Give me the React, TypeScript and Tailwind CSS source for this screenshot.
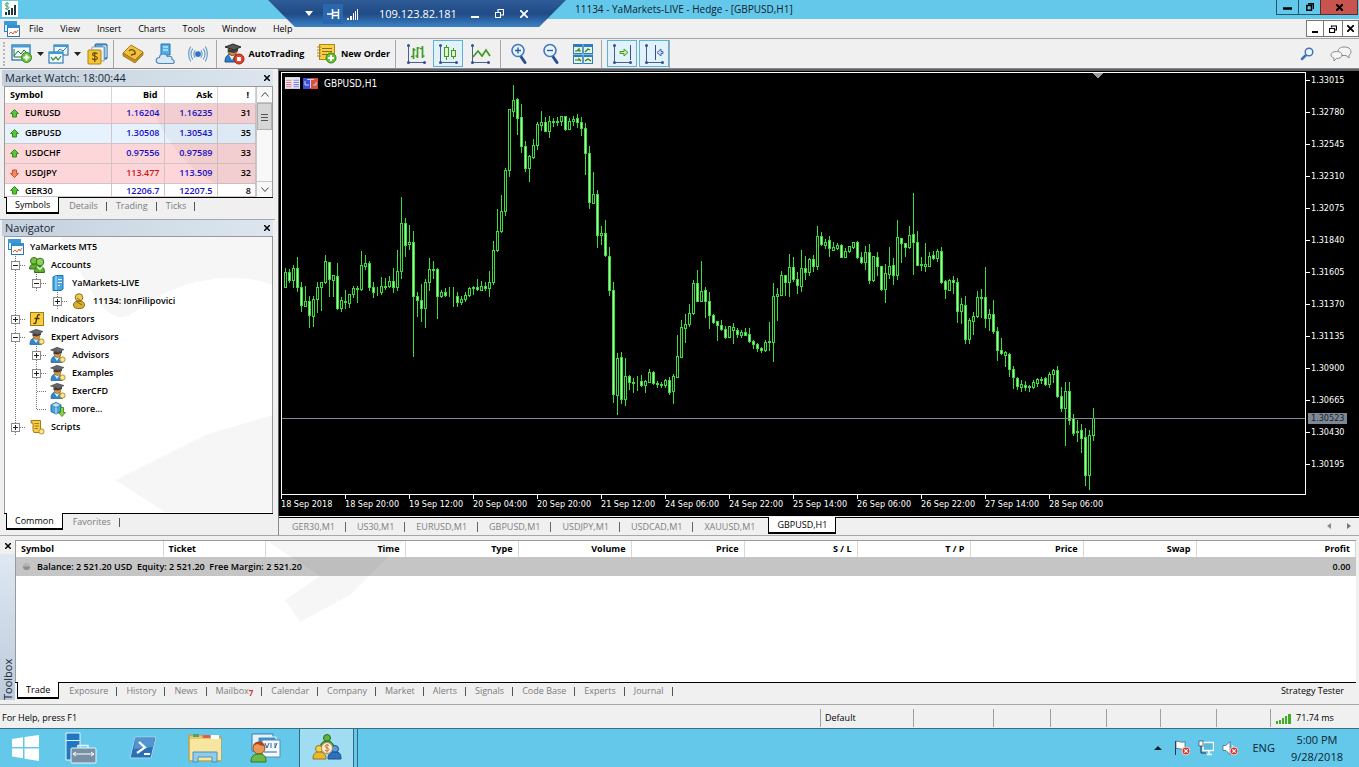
import type { ReactNode } from 'react'
import clsx from 'clsx'

// high, body top, body bottom, low, falling (1) or rising (0), in plot pixels
const candles = [
  [215, 215, 215, 215, 0], [196, 200, 215, 215, 0], [197, 200, 208, 210, 1], [193, 196, 208, 215, 0],
  [185, 196, 215, 219, 1], [210, 215, 233, 239, 1], [214, 229, 234, 234, 0], [224, 229, 243, 255, 1],
  [224, 227, 244, 254, 0], [210, 215, 227, 240, 0], [210, 210, 215, 238, 0], [183, 189, 210, 211, 0],
  [190, 190, 207, 224, 1], [203, 203, 208, 224, 0], [191, 204, 236, 237, 1], [225, 228, 236, 239, 0],
  [218, 229, 230, 236, 1], [222, 222, 231, 235, 0], [214, 216, 222, 225, 0], [214, 216, 217, 230, 0],
  [179, 193, 217, 218, 0], [183, 191, 194, 197, 0], [189, 191, 215, 218, 1], [210, 215, 220, 225, 1],
  [215, 220, 220, 223, 0], [205, 214, 220, 222, 0], [206, 214, 215, 217, 0], [204, 209, 214, 215, 0],
  [196, 209, 215, 220, 1], [178, 199, 215, 218, 0], [125, 151, 199, 206, 0], [146, 151, 173, 184, 1],
  [153, 170, 172, 177, 0], [159, 170, 224, 284, 1], [220, 224, 228, 244, 1], [212, 228, 236, 249, 1],
  [207, 210, 236, 255, 0], [186, 197, 210, 218, 0], [189, 197, 198, 206, 0], [196, 197, 224, 246, 1],
  [218, 220, 224, 225, 0], [216, 220, 223, 224, 1], [215, 223, 223, 224, 0], [215, 224, 224, 234, 0],
  [220, 224, 230, 234, 1], [224, 227, 230, 232, 0], [220, 223, 227, 229, 0], [215, 216, 223, 224, 0],
  [214, 215, 216, 222, 0], [207, 215, 217, 218, 1], [209, 214, 218, 218, 0], [210, 214, 216, 218, 1],
  [199, 210, 216, 224, 0], [169, 178, 210, 212, 0], [137, 159, 178, 179, 0], [123, 139, 159, 160, 0],
  [96, 98, 139, 143, 0], [37, 37, 98, 104, 0], [13, 28, 39, 44, 0], [26, 27, 46, 62, 1],
  [32, 45, 74, 80, 1], [69, 74, 96, 99, 1], [83, 84, 96, 109, 0], [67, 73, 85, 86, 0],
  [50, 52, 73, 77, 0], [39, 50, 53, 58, 0], [45, 50, 59, 59, 1], [44, 49, 59, 65, 0],
  [46, 49, 50, 54, 0], [45, 49, 50, 53, 0], [44, 44, 49, 53, 0], [44, 44, 57, 58, 1],
  [46, 49, 57, 57, 0], [44, 47, 49, 53, 0], [42, 46, 50, 55, 1], [45, 50, 56, 63, 1],
  [51, 56, 81, 102, 1], [74, 81, 130, 136, 1], [100, 122, 131, 131, 0], [118, 122, 163, 175, 1],
  [154, 161, 163, 172, 0], [148, 161, 183, 184, 1], [175, 184, 218, 223, 1], [210, 218, 322, 330, 1],
  [281, 286, 323, 342, 0], [280, 285, 327, 331, 1], [286, 304, 327, 333, 0], [303, 304, 310, 317, 1],
  [306, 310, 311, 320, 0], [304, 310, 310, 318, 0], [303, 309, 313, 314, 1], [308, 309, 313, 320, 0],
  [297, 300, 310, 310, 0], [299, 300, 311, 312, 1], [309, 311, 312, 315, 0], [310, 312, 313, 315, 0],
  [307, 308, 313, 315, 0], [305, 308, 320, 322, 1], [302, 304, 319, 331, 0], [263, 284, 305, 305, 0],
  [248, 255, 285, 285, 0], [242, 252, 256, 270, 0], [232, 241, 252, 254, 0], [208, 211, 241, 242, 0],
  [198, 211, 229, 229, 1], [189, 219, 229, 229, 0], [215, 218, 229, 245, 1], [220, 229, 243, 256, 1],
  [242, 243, 250, 251, 1], [249, 249, 253, 268, 1], [248, 253, 257, 258, 1], [254, 257, 265, 266, 1],
  [254, 254, 265, 265, 0], [251, 255, 258, 271, 0], [256, 258, 262, 265, 1], [258, 260, 263, 265, 0],
  [256, 260, 263, 263, 1], [256, 262, 269, 270, 1], [268, 269, 272, 276, 1], [271, 272, 276, 279, 1],
  [275, 276, 278, 280, 1], [268, 270, 278, 279, 0], [250, 269, 270, 278, 0], [211, 224, 270, 289, 0],
  [216, 222, 224, 248, 0], [199, 203, 223, 223, 0], [203, 203, 210, 223, 1], [182, 195, 210, 224, 0],
  [185, 195, 207, 209, 1], [200, 207, 213, 221, 1], [178, 196, 214, 219, 0], [184, 196, 200, 207, 1],
  [186, 187, 200, 203, 0], [183, 187, 194, 199, 1], [154, 164, 194, 197, 0], [160, 164, 172, 173, 1],
  [167, 170, 173, 176, 0], [164, 168, 176, 184, 1], [170, 175, 178, 178, 0], [171, 173, 176, 177, 0],
  [172, 173, 185, 185, 1], [176, 179, 185, 185, 0], [174, 174, 179, 180, 0], [170, 170, 175, 176, 0],
  [169, 170, 185, 186, 1], [180, 185, 190, 191, 1], [174, 180, 190, 197, 0], [172, 180, 208, 211, 1],
  [184, 184, 208, 209, 0], [180, 185, 194, 203, 1], [194, 194, 217, 218, 1], [192, 201, 217, 230, 0],
  [175, 194, 202, 206, 0], [186, 193, 203, 212, 1], [148, 165, 203, 207, 0], [166, 166, 171, 190, 1],
  [171, 171, 175, 184, 1], [154, 163, 175, 176, 0], [121, 162, 170, 202, 1], [159, 170, 193, 193, 1],
  [185, 192, 193, 198, 0], [171, 192, 194, 199, 0], [180, 184, 194, 194, 0], [179, 183, 186, 187, 1],
  [177, 179, 186, 189, 0], [175, 179, 210, 211, 1], [208, 209, 217, 226, 1], [207, 208, 218, 218, 0],
  [204, 208, 210, 221, 1], [206, 210, 239, 250, 1], [226, 232, 239, 251, 0], [224, 233, 267, 271, 1],
  [246, 248, 267, 271, 0], [240, 244, 249, 262, 0], [219, 225, 244, 245, 0], [217, 225, 226, 245, 0],
  [195, 225, 246, 255, 1], [237, 242, 246, 258, 0], [228, 242, 259, 261, 1], [255, 259, 278, 288, 1],
  [266, 278, 281, 282, 1], [279, 280, 283, 294, 0], [281, 282, 297, 304, 1], [294, 297, 305, 316, 1],
  [305, 306, 314, 317, 1], [308, 312, 315, 319, 0], [309, 313, 315, 318, 1], [313, 314, 315, 319, 0],
  [308, 310, 315, 316, 0], [306, 307, 311, 314, 0], [305, 307, 308, 311, 0], [305, 306, 312, 313, 1],
  [300, 302, 312, 315, 0], [297, 298, 302, 310, 0], [294, 298, 324, 325, 1], [315, 324, 336, 339, 1],
  [310, 319, 336, 373, 0], [310, 319, 348, 352, 1], [342, 346, 361, 363, 1], [348, 359, 360, 369, 0],
  [352, 358, 366, 380, 1], [356, 365, 403, 413, 1], [358, 363, 403, 417, 0], [336, 346, 363, 368, 0],
  [346, 346, 346, 346, 0],
]

const prices = [
  '1.33015', '1.32780', '1.32545', '1.32310', '1.32075', '1.31840', '1.31605',
  '1.31370', '1.31135', '1.30900', '1.30665', '1.30430', '1.30195',
]

const times = [
  '18 Sep 2018', '18 Sep 20:00', '19 Sep 12:00', '20 Sep 04:00', '20 Sep 20:00', '21 Sep 12:00', '24 Sep 06:00',
  '24 Sep 22:00', '25 Sep 14:00', '26 Sep 06:00', '26 Sep 22:00', '27 Sep 14:00', '28 Sep 06:00',
]

const quotes = [
  { symbol: 'EURUSD', bid: '1.16204', ask: '1.16235', spread: '31', row: 'h-5 bg-[#fcd6d8]', bidColor: 'text-[#1a10c8]', up: true },
  { symbol: 'GBPUSD', bid: '1.30508', ask: '1.30543', spread: '35', row: 'h-5 bg-[#e6f3fe]', bidColor: 'text-[#1a10c8]', up: true },
  { symbol: 'USDCHF', bid: '0.97556', ask: '0.97589', spread: '33', row: 'h-5 bg-[#fcd6d8]', bidColor: 'text-[#1a10c8]', up: true },
  { symbol: 'USDJPY', bid: '113.477', ask: '113.509', spread: '32', row: 'h-5 bg-[#fcd6d8]', bidColor: 'text-[#d01818]', up: false },
  { symbol: 'GER30', bid: '12206.7', ask: '12207.5', spread: '8', row: 'h-[13px] align-bottom leading-[10px] bg-white', bidColor: 'text-[#1a10c8]', up: true },
]

// guides: | line, T branch, L last branch, + collapsed, - expanded, space empty
const tree = [
  { guides: '', icon: 'app', label: 'YaMarkets MT5' },
  { guides: '-', icon: 'accounts', label: 'Accounts' },
  { guides: '|-', icon: 'server', label: 'YaMarkets-LIVE' },
  { guides: '| +', icon: 'user', label: '11134: IonFilipovici' },
  { guides: '+', icon: 'function', label: 'Indicators' },
  { guides: '-', icon: 'expert', label: 'Expert Advisors' },
  { guides: '|+', icon: 'expert', label: 'Advisors' },
  { guides: '|+', icon: 'expert', label: 'Examples' },
  { guides: '|T', icon: 'expert', label: 'ExerCFD' },
  { guides: '|L', icon: 'more', label: 'more...' },
  { guides: '+', icon: 'script', label: 'Scripts' },
]

const menus = ['File', 'View', 'Insert', 'Charts', 'Tools', 'Window', 'Help']
const chartTabs = ['GER30,M1', 'US30,M1', 'EURUSD,M1', 'GBPUSD,M1', 'USDJPY,M1', 'USDCAD,M1', 'XAUUSD,M1', 'GBPUSD,H1']
const toolboxTabs = [
  'Trade', 'Exposure', 'History', 'News', 'Mailbox', 'Calendar', 'Company',
  'Market', 'Alerts', 'Signals', 'Code Base', 'Experts', 'Journal',
]

const columns = [
  { label: 'Symbol', col: 'w-[147px]', align: 'text-left' },
  { label: 'Ticket', col: 'w-[102px]', align: 'text-left' },
  { label: 'Time', col: 'w-[140px]', align: 'text-right' },
  { label: 'Type', col: 'w-[113px]', align: 'text-right' },
  { label: 'Volume', col: 'w-[113px]', align: 'text-right' },
  { label: 'Price', col: 'w-[113px]', align: 'text-right' },
  { label: 'S / L', col: 'w-[113px]', align: 'text-right' },
  { label: 'T / P', col: 'w-[113px]', align: 'text-right' },
  { label: 'Price', col: 'w-[113px]', align: 'text-right' },
  { label: 'Swap', col: 'w-[113px]', align: 'text-right' },
  { label: 'Profit', col: '', align: 'text-right' },
]

function AppIcon() {
  return (
    <svg width="16" height="16" viewBox="0 0 16 16">
      <rect x=".5" y=".5" width="12" height="10" fill="#e4f4fd" stroke="#2a86c4" />
      <rect x="0" y="0" width="13" height="4" fill="#3a9ad6" />
      <rect x="3.500" y="4.500" width="12" height="11" fill="#fff" stroke="#2a76b4" />
      <rect x="3" y="4" width="13" height="3" fill="#3a8cd0" />
      <path d="M5 13l2-2 2 2 2-3 1 2 2-3" fill="none" stroke="#e0603c" />
    </svg>
  )
}

function ExpertIcon() {
  return (
    <svg width="16" height="16" viewBox="0 0 16 16">
      <path d="M1 15.500c0-5 2-6.500 5.500-6.500s6 2 6 6.500z" fill="#2f86cf" stroke="#1b5c97" strokeWidth=".7" />
      <path d="M4 9.500l3 4.500 3-4.500z" fill="#d7ecf8" />
      <circle cx="7.500" cy="7" r="3.500" fill="#d8973a" stroke="#8b5a18" strokeWidth=".6" />
      <path d="M.5 3L7 .3 14 2.500 8.500 5.500z" fill="#66666c" stroke="#333" strokeWidth=".5" />
      <path d="M3.500 4.300v2.500l4.500.7 4-1.800V3.800L8.500 5.500z" fill="#3c3c42" />
      <circle cx="12.500" cy="12.500" r="2.600" fill="#fbe689" stroke="#b8902a" />
    </svg>
  )
}

function TreeIcon({ name }: { name: string }) {
  switch (name) {
    case 'app':
      return <AppIcon />
    case 'expert':
      return <ExpertIcon />
    case 'accounts':
      return (
        <svg width="16" height="16" viewBox="0 0 16 16">
          <circle cx="5" cy="4" r="3.500" fill="#7ac043" stroke="#2e7415" />
          <path d="M.5 12c0-3 2-5 4.500-5s4.500 2 4.500 5z" fill="#5fae2d" stroke="#2e7415" />
          <circle cx="11" cy="5" r="3.800" fill="#8fd05a" stroke="#2e7415" />
          <path d="M5.500 15.500c0-5 2-6.500 5-6.500s5 1.500 5 6.500z" fill="#5fae2d" stroke="#2e7415" />
          <path d="M8 9.500l3 3 2.500-3" fill="none" stroke="#e3f6d4" strokeWidth="1.300" />
        </svg>
      )
    case 'server':
      return (
        <svg width="16" height="16" viewBox="0 0 16 16">
          <path d="M3 2l3-1.500h7V14l-2 1.500H3z" fill="#45a8e4" stroke="#1b70ae" />
          <path d="M6 .5V15" stroke="#b9e2f8" />
          <path d="M8 4.500h4M8 7.500h4M8 10.500h2" stroke="#fff" />
        </svg>
      )
    case 'user':
      return (
        <svg width="16" height="16" viewBox="0 0 16 16">
          <circle cx="8" cy="4.500" r="3.800" fill="#edc94f" stroke="#92701a" />
          <path d="M2.500 12c0-3 2.500-4 5.500-4s5.500 1 5.500 4-2.500 3.500-5.500 3.500S2.500 15 2.500 12z" fill="#dcae2f" stroke="#92701a" />
          <path d="M6 5l4 3-4 1 5 3" fill="none" stroke="#8a6a18" />
        </svg>
      )
    case 'function':
      return (
        <svg width="16" height="16" viewBox="0 0 16 16">
          <rect x="1.500" y="1.500" width="13" height="13" fill="#f8ce3c" stroke="#a8791a" />
          <path d="M11 4c-2-1-2.500 0-3 3l-1 4c-.3 1.500-1 2-2.500 1M5.500 7.500h5" fill="none" stroke="#4a3308" strokeWidth="1.300" />
        </svg>
      )
    case 'more':
      return (
        <svg width="16" height="16" viewBox="0 0 16 16">
          <path d="M1 4l5-2.500L11 4v6.500l-5 2.500-5-2.500z" fill="#4aa4dc" stroke="#1d6ca4" />
          <path d="M1 4l5 2.500L11 4 6 1.500z" fill="#b8e0f5" stroke="#1d6ca4" strokeWidth=".6" />
          <path d="M6 6.500V13" stroke="#d0edfb" />
          <path d="M10.500 6.500h3v5h2l-3.500 4-3.500-4h2z" fill="#8ccf4a" stroke="#35801a" strokeWidth=".8" />
        </svg>
      )
    default:
      return (
        <svg width="16" height="16" viewBox="0 0 16 16">
          <path d="M2 1.500h9.500v9H14v3H5l-1-2V4H2z" fill="#f6cd47" stroke="#a8791a" />
          <path d="M5.500 4.500H10M5.500 7H10M5.500 9.500H9" stroke="#a8791a" />
          <circle cx="12.500" cy="12.500" r="2.600" fill="#fbe689" stroke="#b8902a" />
        </svg>
      )
  }
}

function Guide({ kind }: { kind: string }) {
  const boxed = kind === '+' || kind === '-'
  return (
    <svg className="shrink-0" width="21" height="18" viewBox="0 0 21 18" fill="none" stroke="#777" strokeDasharray="1 1">
      {(kind === '|' || kind === 'T') && <path d="M10.500 0v18" />}
      {kind === 'L' && <path d="M10.500 0v9" />}
      {(kind === 'T' || kind === 'L') && <path d="M11 9.500h9" />}
      {boxed && (
        <>
          <path d="M10.500 0v18M15 9.500h6" />
          <rect x="6.500" y="5.500" width="8" height="8" fill="#fff" stroke="#8a8a8a" strokeDasharray="none" />
          <path d={kind === '+' ? 'M8 9.500h5M10.500 7v5' : 'M8 9.500h5'} stroke="#222" strokeDasharray="none" />
        </>
      )}
    </svg>
  )
}

function ToolButton({ label, active, className, children }: { label: string; active?: boolean; className?: string; children: ReactNode }) {
  return (
    <button
      aria-label={label}
      className={clsx(
        'flex h-[27px] shrink-0 items-center justify-center',
        active ? 'border border-[#5cb2dc] bg-[#e2f2fb]' : '',
        className ?? 'w-[30px]'
      )}
    >
      {children}
    </button>
  )
}

function ToolDivider() {
  return <span className="h-[28px] w-px shrink-0 bg-[#a8a8a8]" />
}

function Caret() {
  return (
    <svg className="ml-1" width="7" height="4" viewBox="0 0 7 4">
      <path d="M0 0h7L3.500 4z" fill="#222" />
    </svg>
  )
}

// The axes shared by every chart-type icon
function Axes({ children }: { children: ReactNode }) {
  return (
    <svg width="22" height="22" viewBox="0 0 22 22" fill="none">
      <path d="M3.500 2v17.500H20" stroke="#4d5f8e" />
      <circle cx="3.500" cy="2.500" r="1.500" fill="#35508f" />
      <circle cx="3.500" cy="19.500" r="1.500" fill="#35508f" />
      <circle cx="19.500" cy="19.500" r="1.500" fill="#35508f" />
      {children}
    </svg>
  )
}

function Magnifier({ plus }: { plus?: boolean }) {
  return (
    <svg width="18" height="22" viewBox="0 0 18 22" fill="none">
      <path d="M10.500 13l4.500 6.500" stroke="#284f96" strokeWidth="3" strokeLinecap="round" />
      <circle cx="8" cy="7.500" r="6" fill="#e9f5fd" stroke="#4278bd" strokeWidth="1.600" />
      <path d={plus ? 'M5 7.500h6M8 4.500v6' : 'M5 7.500h6'} stroke="#2f5ba4" strokeWidth="1.400" />
    </svg>
  )
}

function Toolbar() {
  return (
    <div className="flex h-[30px] items-center border-t border-[#a5a5a5] bg-[#f0f0f0]">
      <span className="ml-[3px] mr-1 h-6 w-0 border-l-2 border-dotted border-[#b5b5b5]" />
      <ToolButton label="New chart" className="w-[36px]">
        <svg width="22" height="20" viewBox="0 0 22 20">
          <rect x="1" y="1" width="18" height="15" fill="#f2fafe" stroke="#2f7fb9" strokeWidth="1.400" />
          <path d="M1 2.500h18" stroke="#3f9ad6" strokeWidth="2" />
          <path d="M3 5v8h13M3 12l4-5 3 3 3-4 3 3" fill="none" stroke="#2f6a24" />
          <circle cx="15.500" cy="13.500" r="5" fill="#6dc23c" stroke="#2f8a1c" />
          <path d="M12.500 13.500h6M15.500 10.500v6" stroke="#fff" strokeWidth="2" />
        </svg>
        <Caret />
      </ToolButton>
      <ToolButton label="Profiles" className="w-[38px]">
        <svg width="22" height="20" viewBox="0 0 22 20">
          <rect x="6" y="1" width="14" height="10" fill="#f2fafe" stroke="#2f7fb9" strokeWidth="1.200" />
          <path d="M6 2h14" stroke="#3f9ad6" strokeWidth="2" />
          <path d="M9 8l3-3 3 2 4-4" fill="none" stroke="#4578a0" />
          <rect x="1" y="8" width="14" height="11" fill="#f2fafe" stroke="#2f7fb9" strokeWidth="1.200" />
          <path d="M1 9h14" stroke="#3f9ad6" strokeWidth="2" />
          <path d="M3 13l2 3 3-3 2 3 3-4" fill="none" stroke="#3c8a2a" strokeWidth="1.200" />
        </svg>
        <Caret />
      </ToolButton>
      <ToolButton label="Market watch" className="w-[30px]">
        <svg width="22" height="22" viewBox="0 0 22 22">
          <rect x="8" y="1" width="12" height="15" rx="1" fill="#57a6e0" stroke="#1d5c9a" />
          <path d="M16 3h3v11" fill="none" stroke="#e8f6ff" />
          <rect x="5" y="4" width="12" height="14" fill="#eef3f6" stroke="#888" strokeWidth=".7" />
          <rect x="1" y="7" width="13" height="14" rx="1" fill="#f5c535" stroke="#ad7f16" />
          <path d="M10.500 11c-1-1.500-5-1.500-5 .5s5 1.500 5 3.500-4 2-5.500.5M7.800 9v10" fill="none" stroke="#6b4a05" strokeWidth="1.200" />
        </svg>
      </ToolButton>
      <ToolDivider />
      <ToolButton label="Navigator" className="w-[38px]">
        <svg width="22" height="20" viewBox="0 0 22 20">
          <path d="M1 9l8-8 12 7-8 9z" fill="#f0c040" stroke="#a87d18" />
          <path d="M1 9v3l12 7 8-8V8l-8 8z" fill="#c98d1c" stroke="#8a6010" strokeWidth=".6" />
          <path d="M7 7c3-3 7 0 6 3l-4 1" fill="none" stroke="#6b4a05" strokeWidth="1.300" />
        </svg>
      </ToolButton>
      <ToolButton label="Cloud" className="w-[28px]">
        <svg width="22" height="22" viewBox="0 0 22 22">
          <path d="M6 1h9v11H6z" fill="#52b0e8" stroke="#2374b0" />
          <path d="M8 4h5M8 7h5" stroke="#fff" />
          <path d="M5 20.500c-5 0-5-6-.5-6 0-4 6.500-5 8-1 4-1 5 1 4.500 3 3 .5 3 4 0 4z" fill="#d6e9f8" stroke="#4f84bc" strokeWidth="1.200" />
        </svg>
      </ToolButton>
      <ToolButton label="Signals" className="w-[36px]">
        <svg width="20" height="18" viewBox="0 0 22 18" fill="none" stroke="#6c9cc8" strokeWidth="1.300">
          <circle cx="11" cy="9" r="2.500" fill="#2f73b8" stroke="#2f73b8" />
          <path d="M8 5c-2 2-2 6 0 8M14 5c2 2 2 6 0 8M5.500 3c-3 3-3 9 0 12M16.500 3c3 3 3 9 0 12M3 1c-3 4-3 12 0 16M19 1c3 4 3 12 0 16" />
        </svg>
      </ToolButton>
      <ToolDivider />
      <ToolButton label="AutoTrading" className="w-[94px] gap-1 font-bold">
        <svg width="21" height="22" viewBox="0 0 21 22">
          <path d="M1 19c0-6 3-8 7-8s7 2 7 8z" fill="#2f7fc8" stroke="#1c5288" />
          <path d="M5 12l3 5 3-5z" fill="#f3efe4" />
          <circle cx="8.500" cy="8" r="4.500" fill="#d5893a" stroke="#854f17" />
          <path d="M1 4l8-3 8 3-7 3z" fill="#55555b" stroke="#2b2b2b" />
          <path d="M4 6v3l6 1 4-2V5l-4 2z" fill="#3c3c42" />
          <circle cx="15" cy="16" r="5" fill="#e0452c" stroke="#a32210" />
          <rect x="13" y="14" width="4" height="4" fill="#fff" />
        </svg>
        AutoTrading
      </ToolButton>
      <ToolButton label="New Order" className="w-[84px] gap-1 font-bold">
        <svg className="shrink-0" width="21" height="21" viewBox="0 0 21 21">
          <rect x="3.500" y="1.500" width="15" height="15" fill="#f7d043" stroke="#b0861c" />
          <path d="M6 5.500h10M6 8.500h10M6 11.500h7" stroke="#8b6b13" />
          <path d="M1 4h4M1 7h4M1 10h4M1 13h4" stroke="#a8801c" />
          <circle cx="15" cy="15" r="5" fill="#6dc23c" stroke="#2f8a1c" />
          <path d="M12 15h6M15 12v6" stroke="#fff" strokeWidth="2" />
        </svg>
        <span className="whitespace-nowrap">New Order</span>
      </ToolButton>
      <ToolDivider />
      <div className="flex gap-0.5 px-[5px]">
        <ToolButton label="Bar chart">
          <Axes>
            <path d="M8.500 5v11M6 13.500h2M8.500 7h2M12.500 4v11M12.500 13h-2M12.500 5h2M17.500 3v12M15 5.500h2M17.500 13h2" stroke="#3f9a22" strokeWidth="1.700" />
          </Axes>
        </ToolButton>
        <ToolButton label="Candlesticks" active>
          <Axes>
            <path d="M9.500 2v15M16.500 5v11" stroke="#3f9a22" />
            <rect x="7.500" y="4.500" width="4" height="9" fill="#dff5c8" stroke="#3f9a22" />
            <rect x="14.500" y="7.500" width="4" height="6" fill="#dff5c8" stroke="#3f9a22" />
          </Axes>
        </ToolButton>
        <ToolButton label="Line chart">
          <Axes>
            <path d="M4 14l5-6 4 5 4-6 4 6" stroke="#3f9a22" strokeWidth="1.700" />
          </Axes>
        </ToolButton>
      </div>
      <ToolDivider />
      <div className="flex gap-0.5 px-[3px]">
        <ToolButton label="Zoom in"><Magnifier plus /></ToolButton>
        <ToolButton label="Zoom out"><Magnifier /></ToolButton>
        <ToolButton label="Tile windows">
          <svg width="20" height="20" viewBox="0 0 20 20">
            <rect width="20" height="20" fill="#2f7dc0" />
            <path d="M1 3h8v6H1zM11 3h8v6h-8zM1 13h8v6H1zM11 13h8v6h-8z" fill="#e6f5df" />
            <path d="M10 0v20M0 10.500h20" stroke="#bfe0f4" strokeWidth=".6" />
            <path d="M2 7h2l2-2v2h2M12 8l3-3 2 1M2 16h4v-1l2 2M12 17l3-2 3 2" fill="none" stroke="#2a7a1c" strokeWidth="1.200" />
          </svg>
        </ToolButton>
      </div>
      <ToolDivider />
      <div className="flex gap-0.5 pl-[5px]">
        <ToolButton label="Auto scroll" active>
          <Axes>
            <path d="M19.500 2v15" stroke="#35508f" />
            <path d="M9 8.500h4V6l4 3.500-4 3.500v-2.500H9z" fill="#c7f0a8" stroke="#3f9a22" />
          </Axes>
        </ToolButton>
        <ToolButton label="Chart shift" active>
          <Axes>
            <path d="M12.500 2v15" stroke="#35508f" />
            <path d="M20 8.500h-2V6l-4 3.500 4 3.500v-2.500h2z" fill="#c9dcf8" stroke="#4a66b0" />
          </Axes>
        </ToolButton>
      </div>
      <ToolDivider />
      <div className="ml-auto flex items-center gap-4 pr-[7px]">
        <button aria-label="Search">
          <svg width="14" height="14" viewBox="0 0 14 14" fill="none">
            <path d="M5.500 8.500L2 12" stroke="#3f70b8" strokeWidth="2.500" strokeLinecap="round" />
            <circle cx="9" cy="5" r="3.800" fill="#eaf4fd" stroke="#3f70b8" strokeWidth="1.400" />
          </svg>
        </button>
        <button aria-label="Chat">
          <svg width="22" height="16" viewBox="0 0 22 16" fill="#f5f5f5" stroke="#8a8a8a">
            <path d="M14 1c4 0 7 1.500 7 4.500 0 2-1 3-2 3.500v3l-3-2.500h-3C10 9.500 8 8 8 5.500S10 1 14 1z" />
            <path d="M6.500 5.500c3 0 5.500 1 5.500 3.500s-2.500 3.500-5.500 3.500L4 15v-3C2 11.500 1 10.500 1 9c0-2.500 2.500-3.500 5.500-3.500z" />
          </svg>
        </button>
      </div>
    </div>
  )
}

function Caption({ title }: { title: string }) {
  return (
    <div className="flex h-4 items-center justify-between bg-gradient-to-r from-[#c3d1de] to-[#dde6ee] pl-[3px]">
      <h2 className="text-[11px] leading-4 text-[#1c2733]">{title}</h2>
      <CloseButton />
    </div>
  )
}

function CloseButton() {
  return (
    <button aria-label="Close" className="flex size-3 items-center justify-center">
      <svg width="6" height="6" viewBox="0 0 6 6" stroke="#000" strokeWidth="1.500">
        <path d="M0 0l6 6M6 0L0 6" />
      </svg>
    </button>
  )
}

function PanelTabs({ tabs }: { tabs: string[] }) {
  return (
    <div className="flex h-[17px] shrink-0 border-t border-black pl-0.5">
      {tabs.map((tab, i) => (
        <button
          key={tab}
          className={clsx(
            'relative flex items-center whitespace-nowrap',
            i === 0 ? '-mt-px mr-px h-[17px] border-x border-b-2 border-black bg-white px-2 text-black' : 'h-4 px-[9px] text-[#7c7c7c]'
          )}
        >
          {tab}
          {tab === 'Mailbox' && <span className="mt-1 text-[8px] font-bold text-[#d8303c]">7</span>}
          {i > 0 && <span className="absolute right-0 top-1 h-[9px] w-px bg-[#555]" />}
        </button>
      ))}
    </div>
  )
}

function QuoteArrow({ up }: { up: boolean }) {
  return (
    <svg className={clsx('shrink-0', !up && 'rotate-180')} width="9" height="9" viewBox="0 0 9 9">
      <path d="M4.500.5l4 4h-2V8h-4V4.500h-2z" fill={up ? '#5cc43c' : '#f08a64'} stroke={up ? '#2f8a1c' : '#d04a2c'} />
    </svg>
  )
}

function MarketWatch() {
  return (
    <section className="px-0.5 pt-px">
      <Caption title="Market Watch: 18:00:44" />
      <div className="ml-0.5 flex h-[111px] overflow-hidden border border-b-0 border-[#9a9a9a] bg-white">
        <div className="min-w-0 flex-1 overflow-hidden">
          <table className="w-full table-fixed border-collapse font-semibold">
            <thead>
              <tr className="h-4 border-b border-[#d4d4d4]">
                <th className="w-[106px] border-r border-[#d4d4d4] pl-[5px] text-left">Symbol</th>
                <th className="w-[53px] border-r border-[#d4d4d4] pr-1.5 text-right">Bid</th>
                <th className="w-[53px] border-r border-[#d4d4d4] pr-1 text-right">Ask</th>
                <th className="border-r border-[#d4d4d4] pr-1.5 text-right">!</th>
              </tr>
            </thead>
            <tbody>
              {quotes.map((q) => (
                <tr key={q.symbol} className={clsx('border-b border-[#d4c4c8]', q.row)}>
                  <td className="border-r border-[#d4c4c8] pl-[5px]">
                    <span className="flex items-center gap-1.5">
                      <QuoteArrow up={q.up} />
                      {q.symbol}
                    </span>
                  </td>
                  <td className={clsx('border-r border-[#d4c4c8] pr-1 text-right', q.bidColor)}>{q.bid}</td>
                  <td className="border-r border-[#d4c4c8] pr-1 text-right text-[#1a10c8]">{q.ask}</td>
                  <td className="border-r border-[#d4c4c8] pr-1 text-right">{q.spread}</td>
                </tr>
              ))}
            </tbody>
          </table>
        </div>
        <div className="flex w-4 flex-col border-l border-[#c8c8c8] bg-[#f8f8f8]">
          <button aria-label="Scroll up" className="flex h-4 items-center justify-center border-b border-[#c8c8c8]">
            <svg width="8" height="5" viewBox="0 0 8 5" fill="none" stroke="#444"><path d="M.5 4.500l3.500-4 3.500 4" /></svg>
          </button>
          <div className="flex h-[27px] items-center justify-center border border-[#b0b0b0] bg-[#d6d6d6]">
            <svg width="7" height="8" viewBox="0 0 7 8" stroke="#555"><path d="M0 1.500h7M0 4.500h7M0 7.500h7" /></svg>
          </div>
          <button aria-label="Scroll down" className="mt-auto flex h-4 items-center justify-center border-t border-[#c8c8c8]">
            <svg width="8" height="5" viewBox="0 0 8 5" fill="none" stroke="#444"><path d="M.5.5l3.500 4 3.500-4" /></svg>
          </button>
        </div>
      </div>
      <div className="ml-0.5">
        <PanelTabs tabs={['Symbols', 'Details', 'Trading', 'Ticks']} />
      </div>
    </section>
  )
}

function Navigator() {
  return (
    <section className="mt-[5px] flex min-h-0 flex-1 flex-col border-t border-[#a8a8a8] px-0.5 pb-[5px]">
      <Caption title="Navigator" />
      <div className="ml-0.5 flex-1 overflow-hidden border border-b-0 border-[#9a9a9a] bg-white pt-px">
        {tree.map((node) => (
          <div key={node.label} className="flex h-[18px] items-center font-semibold">
            {node.guides.split('').map((kind, i) => (
              <Guide key={i} kind={kind} />
            ))}
            <span className="flex w-[21px] shrink-0 justify-center"><TreeIcon name={node.icon} /></span>
            <span className="pl-1">{node.label}</span>
          </div>
        ))}
      </div>
      <div className="ml-0.5">
        <PanelTabs tabs={['Common', 'Favorites']} />
      </div>
    </section>
  )
}

function Candles() {
  return (
    <svg className="block h-full w-full" shapeRendering="crispEdges">
      <g transform="translate(-1 -1)">
        {candles.map(([high, top, bottom, low, falling], i) => {
          const x = i * 4
          return (
            <g key={i} fill={falling ? '#a4ffa4' : '#000'} stroke="#3cdc3c">
              <path d={`M${x + 0.5} ${high}V${low + 1}`} />
              <rect x={x - 0.5} y={top + 0.5} width="2" height={Math.max(bottom - top, 0)} />
            </g>
          )
        })}
        <path d="M0 346.500h3000" stroke="#7d8894" />
        <path d="M811 1h11l-5 5z" fill="#9a9a9a" />
      </g>
    </svg>
  )
}

function ChartWindow() {
  return (
    <div className="flex min-h-0 min-w-0 flex-1 flex-col border-l border-t-2 border-[#5a6066] bg-black font-['DejaVu_Sans_Condensed','DejaVu_Sans',sans-serif] text-[9px] text-white">
      <div className="flex min-h-0 flex-1 pl-0.5 pt-px">
        <div className="relative min-w-0 flex-1 border border-white">
          <Candles />
          <div className="absolute left-[3px] top-1 flex items-center gap-[3px]">
            <svg width="15" height="12" viewBox="0 0 14 11">
              <rect width="14" height="11" fill="#e8e8f4" />
              <path d="M1 3h5M1 5h5M1 7h5M1 9h5" stroke="#e88080" />
              <path d="M8 3h5M8 5h5M8 7h5M8 9h5" stroke="#7c88e0" />
            </svg>
            <svg width="15" height="11" viewBox="0 0 15 11">
              <path d="M0 0h7v11H0z" fill="#3c50d8" />
              <path d="M7 0h8v11H7z" fill="#d8503c" />
              <path d="M2 3v4h4M13 4v3h-3M4 1.500h7M7.500 1v9" stroke="#c8d0f0" fill="none" />
            </svg>
            <span className="pl-[3px] text-[10px] leading-[11px]">GBPUSD,H1</span>
          </div>
        </div>
        <div className="relative w-[53px] shrink-0 overflow-hidden pt-px">
          {prices.map((price) => (
            <div key={price} className="flex h-8 items-start">
              <span className="flex h-[14px] items-center gap-px">
                <span className="h-px w-1 bg-white" />
                {price}
              </span>
            </div>
          ))}
          <span className="absolute left-0.5 top-[341px] bg-[#7d8894] px-[3px] leading-[11px] text-[#1c242c]">1.30523</span>
        </div>
      </div>
      <div className="flex h-[21px] shrink-0 overflow-hidden pl-0.5">
        {times.map((time) => (
          <span key={time} className="relative w-16 shrink-0 whitespace-nowrap pt-[3px] leading-3">
            <span className="absolute left-0 top-0 h-1 w-px bg-white" />
            {time}
          </span>
        ))}
      </div>
    </div>
  )
}

function ChartTabs() {
  return (
    <div className="flex h-[19px] shrink-0 items-start border-l border-[#8a8a8a] bg-[#f0f0f0] pt-px">
      <div className="flex h-[17px] flex-1 items-start border-t border-black pl-0.5">
        {chartTabs.map((tab, i) => {
          const active = i === chartTabs.length - 1
          return (
            <button
              key={tab}
              className={clsx(
                'relative flex items-center whitespace-nowrap',
                active ? '-mt-px ml-0.5 h-[17px] border-x border-b-2 border-black bg-white px-2' : 'h-[17px] px-[11px] text-[#808080]'
              )}
            >
              {tab}
              {i < chartTabs.length - 2 && <span className="absolute right-0 top-1 h-[10px] w-px bg-[#666]" />}
            </button>
          )
        })}
        <div className="ml-auto flex gap-4 pr-2 pt-[5px]">
          <button aria-label="Previous chart" className="block">
            <svg width="4" height="6" viewBox="0 0 4 6"><path d="M4 0v6L0 3z" fill="#8a8a8a" /></svg>
          </button>
          <button aria-label="Next chart" className="block">
            <svg width="4" height="6" viewBox="0 0 4 6"><path d="M0 0v6l4-3z" fill="#777" /></svg>
          </button>
        </div>
      </div>
    </div>
  )
}

function Toolbox() {
  return (
    <section className="flex h-[169px] shrink-0 border-t border-[#a8a8a8] bg-[#f0f0f0] pt-1">
      <div className="flex w-[15px] shrink-0 flex-col items-center">
        <CloseButton />
        <div className="mb-1 mt-0.5 flex w-[15px] flex-1 rotate-180 items-center justify-start bg-gradient-to-b from-[#bccbdb] to-[#dfe8f2] [writing-mode:vertical-rl]">
          <h2 className="text-[11px] leading-[15px] text-[#1c2733]">Toolbox</h2>
        </div>
      </div>
      <div className="flex min-w-0 flex-1 flex-col pb-[5px] pr-[3px]">
        <div className="min-h-0 flex-1 border-l border-t border-[#9a9a9a] bg-white">
          <table className="w-full table-fixed border-collapse font-semibold">
            <thead>
              <tr className="h-4">
                {columns.map((c, i) => (
                  <th key={i} className={clsx('border-r border-[#d8d8d8] px-[5px]', c.col, c.align)}>{c.label}</th>
                ))}
              </tr>
            </thead>
            <tbody>
              <tr className="h-[19px] bg-[#c5c5c5]">
                <td colSpan={10}>
                  <span className="flex items-center gap-1.5 pl-1.5">
                    <svg width="9" height="9" viewBox="0 0 9 9">
                      <circle cx="4.500" cy="4.500" r="3.500" fill="#b4b4b4" />
                      <path d="M1 4.500a3.500 3.500 0 0 0 7 0z" fill="#8c8c8c" />
                    </svg>
                    <span className="whitespace-pre">Balance: 2 521.20 USD  Equity: 2 521.20  Free Margin: 2 521.20</span>
                  </span>
                </td>
                <td className="pr-[5px] text-right">0.00</td>
              </tr>
            </tbody>
          </table>
        </div>
        <div className="flex">
          <div className="min-w-0 flex-1">
            <PanelTabs tabs={toolboxTabs} />
          </div>
          <button className="border-t border-black px-3">Strategy Tester</button>
        </div>
      </div>
    </section>
  )
}

function StatusBar() {
  return (
    <footer className="flex h-6 shrink-0 items-center border-t border-[#a8a8a8] bg-[#f0f0f0] pt-[3px]">
      <span className="flex-1 pl-0.5">For Help, press F1</span>
      <span className="flex h-[18px] w-[93px] items-center border-l border-[#a0a0a0] pl-1">Default</span>
      <span className="h-[18px] w-20 border-l border-[#a0a0a0]" />
      <span className="h-[18px] w-[57px] border-l border-[#a0a0a0]" />
      <span className="h-[18px] w-14 border-l border-[#a0a0a0]" />
      <span className="h-[18px] w-[54px] border-l border-[#a0a0a0]" />
      <span className="h-[18px] w-14 border-l border-[#a0a0a0]" />
      <span className="h-[18px] w-[54px] border-l border-[#a0a0a0]" />
      <span className="flex h-[18px] w-[89px] items-center gap-1 border-l border-[#a0a0a0] pl-[5px]">
        <svg width="16" height="11" viewBox="0 0 16 11" fill="#3fae22">
          <path d="M0 8h2v3H0zM3 7h2v4H3zM6 5h2v6H6zM9 3h2v8H9zM12 1h3v10h-3z" />
        </svg>
        71.74 ms
      </span>
    </footer>
  )
}

function ErrorBadge() {
  return (
    <>
      <circle cx="12" cy="11" r="4" fill="#d8342c" stroke="#fbe4e0" strokeWidth=".8" />
      <path d="M10.300 9.300l3.400 3.400M13.700 9.300l-3.400 3.400" stroke="#fff" strokeWidth="1.200" />
    </>
  )
}

function Taskbar() {
  return (
    <nav className="flex h-[39px] shrink-0 items-center border-t border-[#3c6a80] bg-[#63c8ea] text-[#0b2430]">
      <button aria-label="Start" className="flex w-[50px] justify-center">
        <svg width="27" height="26" viewBox="0 0 27 26" fill="#fff">
          <path d="M0 4l11-1.800V12H0zM12.500 2L27 0v12H12.500zM0 13.500h11v9.800L0 21.500zM12.500 13.500H27V26l-14.500-2.200z" />
        </svg>
      </button>
      <button aria-label="Server Manager" className="flex w-[62px] justify-center">
        <svg width="32" height="32" viewBox="0 0 32 32">
          <path d="M1 1h14v27H1z" fill="#1f78c0" stroke="#e6f5fc" />
          <path d="M1 8.500h14" stroke="#e6f5fc" />
          <path d="M13 16v-2.500h10V16" fill="none" stroke="#e6f5fc" strokeWidth="1.500" />
          <rect x="6" y="16" width="25" height="15" rx="1" fill="#7890a6" stroke="#e6f5fc" />
          <path d="M8 22h21M8 22l3-2M8 22l3 2M29 22l-3-2M29 22l-3 2" stroke="#fff" />
        </svg>
      </button>
      <button aria-label="PowerShell" className="flex w-[62px] justify-center">
        <svg width="28" height="24" viewBox="0 0 28 24">
          <path d="M6 1h21l-5 21H1z" fill="#2c70b4" stroke="#a9d4ee" />
          <path d="M6 2h20l-2 9-19 2z" fill="#5294ce" />
          <path d="M10 6l6 5.500L8 17M15 18h6" fill="none" stroke="#fff" strokeWidth="2.200" />
        </svg>
      </button>
      <button aria-label="File Explorer" className="flex w-[62px] justify-center">
        <svg width="34" height="30" viewBox="0 0 34 30">
          <path d="M1 2h12l2 2h18v24H1z" fill="#e8c766" stroke="#c09a3c" />
          <path d="M5 1h6v3H5z" fill="#4aa46c" />
          <path d="M15 2h7v3h-7z" fill="#e05c4c" />
          <path d="M23 2h8v4h-8z" fill="#fff" />
          <path d="M2 6h31v21H2z" fill="#f8e6a0" />
          <path d="M5 29V19h24v10h-5v-5H10v5z" fill="#8fcbea" stroke="#4a90bc" />
        </svg>
      </button>
      <button aria-label="Office" className="flex w-[60px] justify-center">
        <svg width="32" height="30" viewBox="0 0 32 30">
          <path d="M2 1h21v17H2z" fill="#e4f1fa" stroke="#3a7ab4" />
          <path d="M8 4h18v17H8z" fill="#3f8ccc" stroke="#e6f5fc" />
          <path d="M12 7h18v17H12z" fill="#f5fafd" stroke="#5a8ab8" />
          <path d="M15 10l2 5 2-5M21 10v5M25 10v5l2-5M14 19h13" fill="none" stroke="#2c64a4" />
          <circle cx="9" cy="15" r="6" fill="#e59858" stroke="#9a4a1c" />
          <path d="M3 13c1-5 10-6 12 0-4 0-7-2-8-2z" fill="#b4421c" />
          <path d="M1 29c0-6 3-8 8-8s7 2 7 8z" fill="#6cb848" stroke="#2f7a1c" />
        </svg>
      </button>
      <button aria-label="MetaTrader 5" className="ml-[3px] flex h-[38px] w-[55px] items-center justify-center border-x border-[#2f6b86] bg-[#a0ddf2]">
        <svg width="30" height="30" viewBox="0 0 30 30">
          <circle cx="15" cy="5" r="3.500" fill="#5eb43c" stroke="#24701c" />
          <path d="M8 16c0-6 3-8 7-8s7 2 7 8z" fill="#4da43c" stroke="#24701c" />
          <circle cx="7" cy="16" r="3.500" fill="#f4d34c" stroke="#97751a" />
          <path d="M1 26c0-5 2-7 6-7s7 2 7 7z" fill="#eab930" stroke="#97751a" />
          <circle cx="23" cy="16" r="3.500" fill="#5a9adc" stroke="#1f4f8c" />
          <path d="M16 26c0-5 2-7 7-7s6 2 6 7z" fill="#2f70bc" stroke="#1f4f8c" />
          <circle cx="15" cy="15" r="5.500" fill="#faf0dc" stroke="#b08c4c" />
          <path d="M17 12.500c-1-1-4-1-4 .8s4 1.200 4 3.200-3 1.800-4.200.6M15 11v8.500" fill="none" stroke="#d06c2c" />
        </svg>
      </button>
      <span className="ml-[3px] h-[38px] w-px bg-[#2f6b86]" />
      <div className="ml-auto flex items-center gap-2 pr-4">
        <button aria-label="Show hidden icons" className="mr-1">
          <svg width="8" height="4" viewBox="0 0 8 4"><path d="M0 4l4-4 4 4z" fill="#10222c" /></svg>
        </button>
        <svg width="16" height="16" viewBox="0 0 16 16">
          <path d="M1.500 1v14" stroke="#234" />
          <path d="M2 1.500c3-1 5 2 9 0v7c-4 2-6-1-9 0z" fill="#fff" stroke="#456" strokeWidth=".7" />
          <ErrorBadge />
        </svg>
        <svg width="16" height="16" viewBox="0 0 16 16">
          <rect x="5" y="2.500" width="10.500" height="8" fill="#5cb8da" stroke="#fff" strokeWidth="1.400" />
          <path d="M9 14.500h5M11 11v3" stroke="#fff" strokeWidth="1.400" />
          <rect x="1" y="1" width="4" height="5" fill="#fff" stroke="#345" strokeWidth=".7" />
          <path d="M3 6v7h5" fill="none" stroke="#234" />
        </svg>
        <svg width="16" height="16" viewBox="0 0 16 16">
          <path d="M1 5.500h3L8 1.500v13l-4-4H1z" fill="#fff" stroke="#456" strokeWidth=".7" />
          <path d="M10 5c1.500 1 1.500 5 0 6" fill="none" stroke="#fff" />
          <ErrorBadge />
        </svg>
        <span className="ml-1.5 text-[11px]">ENG</span>
        <div className="ml-2 text-center text-[11px] leading-[17px]">
          <p>5:00 PM</p>
          <p>9/28/2018</p>
        </div>
      </div>
    </nav>
  )
}

function RemoteBar() {
  return (
    <div className="absolute left-[268px] top-0 flex h-[27px] w-[298px] items-center bg-gradient-to-b from-[#2f5c96] via-[#1f4a86] to-[#3c84c8] pl-[37px] text-white [clip-path:polygon(0_0,100%_0,91%_100%,9%_100%)]">
      <button aria-label="Connection menu">
        <svg width="8" height="5" viewBox="0 0 8 5"><path d="M0 0h8L4 5z" fill="#fff" /></svg>
      </button>
      <button aria-label="Pin" className="ml-2.5 flex h-5 w-[20px] items-center justify-center bg-[#2a67ac]">
        <svg width="13" height="10" viewBox="0 0 13 10" fill="none" stroke="#fff" strokeWidth="1.500">
          <path d="M0 5h5M5.500 0v10M6 3.500h5M6 6.500h5M11.500 0v10" />
        </svg>
      </button>
      <svg className="ml-1" width="12" height="12" viewBox="0 0 12 12" fill="#fff">
        <path d="M0 10h2v2H0zM3 8h2v4H3zM6 5h1v7H6zM8 3h1v9H8zM10 1h1v11h-1z" />
      </svg>
      <span className="ml-5 text-[11px]">109.123.82.181</span>
      <div className="ml-auto flex items-center gap-4 pr-[38px]">
        <button aria-label="Minimize session">
          <svg width="8" height="9" viewBox="0 0 8 9"><path d="M0 8h8" stroke="#fff" strokeWidth="2" /></svg>
        </button>
        <button aria-label="Restore session">
          <svg width="9" height="9" viewBox="0 0 9 9" fill="none" stroke="#fff">
            <path d="M3 3V.5h5.500V6H6" strokeWidth="1.200" />
            <rect x=".5" y="3.500" width="5" height="5" />
          </svg>
        </button>
        <button aria-label="Close session">
          <svg width="8" height="8" viewBox="0 0 8 8" stroke="#fff" strokeWidth="1.800"><path d="M0 0l8 8M8 0L0 8" /></svg>
        </button>
      </div>
    </div>
  )
}

function TitleBar() {
  return (
    <header className="flex h-[19px] shrink-0 items-start justify-between bg-[#63c8ea]">
      <div className="flex w-[568px] shrink-0 pl-0.5 pt-px">
        <svg width="16" height="16" viewBox="0 0 16 16">
          <rect width="16" height="16" fill="#fff" />
          <path d="M3 11h2v3H3zM6 9h2v5H6zM9 7h2v7H9zM12 4h2v10h-2z" fill="#22343c" />
          <path d="M7 3c-1-1-4-1-4 .7s4 1.200 4 3-3 1.600-4 .6M5 1v8" fill="none" stroke="#3aa86c" />
        </svg>
      </div>
      <h1 className="flex-1 pl-[7px] text-[10px] leading-[19px] text-[#10222c]">11134 - YaMarkets-LIVE - Hedge - [GBPUSD,H1]</h1>
      <div className="flex pr-px">
        <button aria-label="Minimize" className="flex h-[15px] w-[23px] items-center justify-center border border-t-0 border-[#21566c]">
          <svg width="9" height="8" viewBox="0 0 9 8"><path d="M0 5.500h9" stroke="#000" strokeWidth="2.500" /></svg>
        </button>
        <button aria-label="Restore" className="flex h-[15px] w-[21px] items-center justify-center border-b border-[#21566c]">
          <svg width="8" height="8" viewBox="0 0 8 8" fill="none" stroke="#000"><path d="M2 .8h5.500V6M.8 2.500h4.700v4.700H.8z" strokeWidth="1.500" /></svg>
        </button>
        <button aria-label="Close" className="flex h-[15px] w-[38px] items-center justify-center border border-t-0 border-[#5c2c2c] bg-[#c85450]">
          <svg width="7" height="7" viewBox="0 0 7 7" stroke="#000" strokeWidth="2"><path d="M0 0l7 7M7 0L0 7" /></svg>
        </button>
      </div>
    </header>
  )
}

function MenuBar() {
  return (
    <div className="flex h-[19px] shrink-0 items-center bg-[#f0f0f0]">
      <span className="ml-1 mr-[9px]"><AppIcon /></span>
      {menus.map((menu) => (
        <button key={menu} className="mr-[17px]">{menu}</button>
      ))}
      <div className="ml-auto flex">
        <button aria-label="Minimize chart" className="flex h-[17px] w-[18px] items-center justify-center border border-[#777] bg-white">
          <svg width="6" height="8" viewBox="0 0 6 8"><path d="M0 7h6" stroke="#000" strokeWidth="2" /></svg>
        </button>
        <button aria-label="Restore chart" className="flex h-[17px] w-[18px] items-center justify-center border-y border-[#777] bg-white">
          <svg width="8" height="8" viewBox="0 0 8 8" fill="none" stroke="#000"><path d="M2.500 2.500V1h5v4H6M.5 3.500h5v4h-5z" strokeWidth="1.200" /></svg>
        </button>
        <button aria-label="Close chart" className="flex h-[17px] w-[17px] items-center justify-center border border-[#777] bg-white">
          <svg width="7" height="7" viewBox="0 0 7 7" stroke="#000" strokeWidth="1.800"><path d="M0 0l7 7M7 0L0 7" /></svg>
        </button>
      </div>
    </div>
  )
}

// Faint logo mark that lies over the left panels and the toolbox
function Watermark() {
  return (
    <svg className="pointer-events-none absolute left-0 top-0" width="560" height="640" viewBox="0 0 560 640" fill="#000" fillOpacity=".035">
      <path d="M150 104H256V184H216C190 170 170 150 150 104z" />
      <path d="M60 237H273V285C240 272 180 275 135 312 110 330 96 300 60 237z" />
      <path d="M273 415L205 435 115 480 165 512H273z" />
      <path d="M265 540H405L350 595 300 622 285 600 320 576z" />
    </svg>
  )
}

export default function App() {
  return (
    <div className="relative flex h-screen flex-col overflow-hidden bg-[#f0f0f0] font-['Open_Sans','Noto_Sans',sans-serif] text-[9px] leading-3 text-black">
      <TitleBar />
      <MenuBar />
      <RemoteBar />
      <Toolbar />
      <main className="flex min-h-0 flex-1 border-t border-[#8a8a8a]">
        <aside className="flex w-[278px] shrink-0 flex-col pr-[3px]">
          <MarketWatch />
          <Navigator />
        </aside>
        <div className="flex min-w-0 flex-1 flex-col">
          <ChartWindow />
          <ChartTabs />
        </div>
      </main>
      <Toolbox />
      <StatusBar />
      <Taskbar />
      <Watermark />
    </div>
  )
}
